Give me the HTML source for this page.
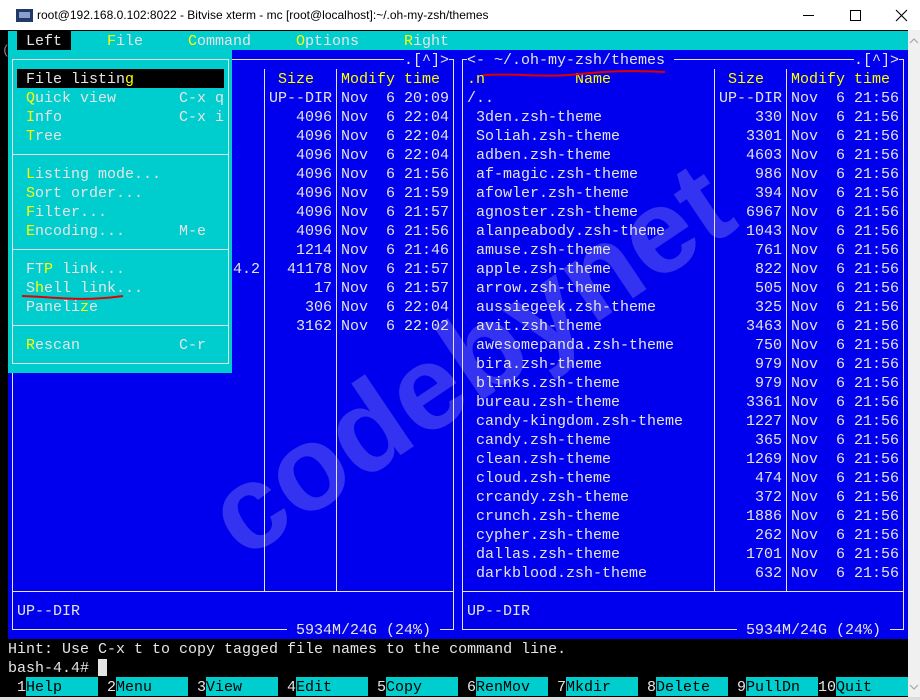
<!DOCTYPE html>
<html><head><meta charset="utf-8"><style>
*{margin:0;padding:0;box-sizing:border-box}
body{width:920px;height:700px;overflow:hidden;background:#000;position:relative;font-family:"Liberation Mono",monospace;font-size:15px;line-height:19px;color:#e5e5e5}
.a{position:absolute}
.t{position:absolute;white-space:pre;padding-top:1px}
.y{color:#ffff00}
.k{color:#000}
.h{position:absolute;height:1px;background:#e5e5e5}
.v{position:absolute;width:1px;background:#e5e5e5}
.b{background:#0000ee}
.r{text-align:right}
.fk{position:absolute;top:677px;height:19px;width:72px;background:#00cdcd;color:#000;white-space:pre;padding-top:1px}
</style></head><body>
<!-- title bar -->
<div class="a" style="left:0;top:0;width:920px;height:30px;background:#fff"></div>
<div class="a" style="left:16px;top:9px;width:17px;height:13px;background:#1f3a6a"></div>
<div class="a" style="left:19px;top:12px;width:11px;height:6px;background:#8aa0c8"></div>
<div class="t" style="left:37px;top:7px;font-family:'Liberation Sans',sans-serif;font-size:12px;line-height:16px;color:#000;padding:0">root@192.168.0.102:8022 - Bitvise xterm - mc [root@localhost]:~/.oh-my-zsh/themes</div>
<div class="a" style="left:803px;top:15px;width:11px;height:1px;background:#000"></div>
<div class="a" style="left:850px;top:10px;width:11px;height:11px;border:1px solid #000"></div>
<svg class="a" style="left:895px;top:9px" width="13" height="13"><path d="M1,1L12,12M12,1L1,12" stroke="#000" stroke-width="1.1"/></svg>
<!-- scrollbar -->
<div class="a" style="left:908px;top:30px;width:12px;height:670px;background:#f0f0f0"></div>
<svg class="a" style="left:908px;top:36px" width="12" height="10"><path d="M2,7L6,3L10,7" stroke="#a0a0a0" fill="none"/></svg>
<svg class="a" style="left:908px;top:682px" width="12" height="10"><path d="M2,3L6,7L10,3" stroke="#a0a0a0" fill="none"/></svg>
<div class="a" style="left:0;top:697px;width:920px;height:3px;background:#dcdcdc"></div>
<div class="t" style="left:2px;top:40px;color:#888;font-size:13px">(</div>
<!-- menu bar -->
<div class="a" style="left:8px;top:31px;width:900px;height:19px;background:#00cdcd"></div>
<div class="a" style="left:17px;top:31px;width:54px;height:19px;background:#000"></div>
<div class="t" style="left:26px;top:31px">Left</div>
<div class="t" style="left:107px;top:31px"><span class="y">F</span>ile</div>
<div class="t" style="left:188px;top:31px"><span class="y">C</span>ommand</div>
<div class="t" style="left:296px;top:31px"><span class="y">O</span>ptions</div>
<div class="t" style="left:404px;top:31px"><span class="y">R</span>ight</div>
<!-- panels bg -->
<div class="a b" style="left:8px;top:50px;width:900px;height:589px"></div>
<!-- watermark -->
<svg class="a" style="left:0;top:0" width="920" height="700"><text x="470" y="400" text-anchor="middle" font-family="Liberation Sans,sans-serif" font-weight="bold" font-size="120" fill="#ffffff" fill-opacity="0.2" transform="rotate(-34 470 360)">codebynet</text></svg>
<!-- left panel borders -->
<div class="h" style="left:12px;top:59px;width:442px"></div>
<div class="h" style="left:12px;top:629px;width:442px"></div>
<div class="h" style="left:12px;top:591px;width:442px"></div>
<div class="v" style="left:12px;top:59px;height:571px"></div>
<div class="v" style="left:453px;top:59px;height:571px"></div>
<div class="v" style="left:264px;top:69px;height:522px"></div>
<div class="v" style="left:336px;top:69px;height:522px"></div>
<!-- right panel borders -->
<div class="h" style="left:462px;top:59px;width:442px"></div>
<div class="h" style="left:462px;top:629px;width:442px"></div>
<div class="h" style="left:462px;top:591px;width:442px"></div>
<div class="v" style="left:462px;top:59px;height:571px"></div>
<div class="v" style="left:903px;top:59px;height:571px"></div>
<div class="v" style="left:714px;top:69px;height:522px"></div>
<div class="v" style="left:786px;top:69px;height:522px"></div>
<!-- border texts -->
<div class="t b" style="left:404px;top:50px;height:19px">.[^]></div>
<div class="t b" style="left:467px;top:50px;height:19px">&lt;- ~/.oh-my-zsh/themes </div>
<div class="t b" style="left:854px;top:50px;height:19px">.[^]></div>
<div class="t b" style="left:287px;top:620px;height:19px"> 5934M/24G (24%) </div>
<div class="t b" style="left:737px;top:620px;height:19px"> 5934M/24G (24%) </div>
<div class="t" style="left:17px;top:601px">UP--DIR</div>
<div class="t" style="left:467px;top:601px">UP--DIR</div>
<!-- left panel content -->
<div class="t y" style="left:278px;top:69px">Size</div>
<div class="t y" style="left:341px;top:69px">Modify time</div>
<div class="t" style="left:233px;top:259px">4.2</div>
<div class="t r" style="left:260px;top:88px;width:72px">UP--DIR
4096
4096
4096
4096
4096
4096
4096
1214
41178
17
306
3162</div>
<div class="t" style="left:341px;top:88px">Nov  6 20:09
Nov  6 22:04
Nov  6 22:04
Nov  6 22:04
Nov  6 21:56
Nov  6 21:59
Nov  6 21:57
Nov  6 21:56
Nov  6 21:46
Nov  6 21:57
Nov  6 21:57
Nov  6 22:04
Nov  6 22:02</div>
<!-- right panel content -->
<div class="t y" style="left:467px;top:69px">.n</div>
<div class="t y" style="left:575px;top:69px">Name</div>
<div class="t y" style="left:728px;top:69px">Size</div>
<div class="t y" style="left:791px;top:69px">Modify time</div>
<div class="t" style="left:467px;top:88px">/..
 3den.zsh-theme
 Soliah.zsh-theme
 adben.zsh-theme
 af-magic.zsh-theme
 afowler.zsh-theme
 agnoster.zsh-theme
 alanpeabody.zsh-theme
 amuse.zsh-theme
 apple.zsh-theme
 arrow.zsh-theme
 aussiegeek.zsh-theme
 avit.zsh-theme
 awesomepanda.zsh-theme
 bira.zsh-theme
 blinks.zsh-theme
 bureau.zsh-theme
 candy-kingdom.zsh-theme
 candy.zsh-theme
 clean.zsh-theme
 cloud.zsh-theme
 crcandy.zsh-theme
 crunch.zsh-theme
 cypher.zsh-theme
 dallas.zsh-theme
 darkblood.zsh-theme</div>
<div class="t r" style="left:710px;top:88px;width:72px">UP--DIR
330
3301
4603
986
394
6967
1043
761
822
505
325
3463
750
979
979
3361
1227
365
1269
474
372
1886
262
1701
632</div>
<div class="t" style="left:791px;top:88px">Nov  6 21:56
Nov  6 21:56
Nov  6 21:56
Nov  6 21:56
Nov  6 21:56
Nov  6 21:56
Nov  6 21:56
Nov  6 21:56
Nov  6 21:56
Nov  6 21:56
Nov  6 21:56
Nov  6 21:56
Nov  6 21:56
Nov  6 21:56
Nov  6 21:56
Nov  6 21:56
Nov  6 21:56
Nov  6 21:56
Nov  6 21:56
Nov  6 21:56
Nov  6 21:56
Nov  6 21:56
Nov  6 21:56
Nov  6 21:56
Nov  6 21:56
Nov  6 21:56</div>
<!-- dropdown menu -->
<div class="a" style="left:8px;top:50px;width:224px;height:323px;background:#00cdcd"></div>
<div class="h" style="left:12px;top:59px;width:217px"></div>
<div class="h" style="left:12px;top:363px;width:217px"></div>
<div class="v" style="left:12px;top:59px;height:305px"></div>
<div class="v" style="left:228px;top:59px;height:305px"></div>
<div class="h" style="left:12px;top:154px;width:217px"></div>
<div class="h" style="left:12px;top:249px;width:217px"></div>
<div class="h" style="left:12px;top:325px;width:217px"></div>
<div class="a" style="left:17px;top:69px;width:207px;height:19px;background:#000"></div>
<div class="t" style="left:26px;top:69px">File listin<span class="y">g</span></div>
<div class="t" style="left:26px;top:88px"><span class="y">Q</span>uick view</div>
<div class="t" style="left:179px;top:88px">C-x q</div>
<div class="t" style="left:26px;top:107px"><span class="y">I</span>nfo</div>
<div class="t" style="left:179px;top:107px">C-x i</div>
<div class="t" style="left:26px;top:126px"><span class="y">T</span>ree</div>
<div class="t" style="left:26px;top:164px"><span class="y">L</span>isting mode...</div>
<div class="t" style="left:26px;top:183px"><span class="y">S</span>ort order...</div>
<div class="t" style="left:26px;top:202px"><span class="y">F</span>ilter...</div>
<div class="t" style="left:26px;top:221px"><span class="y">E</span>ncoding...</div>
<div class="t" style="left:179px;top:221px">M-e</div>
<div class="t" style="left:26px;top:259px">FT<span class="y">P</span> link...</div>
<div class="t" style="left:26px;top:278px">S<span class="y">h</span>ell link...</div>
<div class="t" style="left:26px;top:297px">Paneli<span class="y">z</span>e</div>
<div class="t" style="left:26px;top:335px"><span class="y">R</span>escan</div>
<div class="t" style="left:179px;top:335px">C-r</div>
<!-- red annotations -->
<svg class="a" style="left:0;top:0" width="920" height="700"><path d="M483,75 C520,73 545,78 580,74 S640,71 665,72" stroke="#e00000" stroke-width="2" fill="none"/><path d="M22,296 C55,297 80,302 123,296" stroke="#e00000" stroke-width="2" fill="none"/></svg>
<!-- bottom -->
<div class="t" style="left:8px;top:639px">Hint: Use C-x t to copy tagged file names to the command line.</div>
<div class="t" style="left:8px;top:658px">bash-4.4# </div>
<div class="a" style="left:98px;top:659px;width:9px;height:17px;background:#e5e5e5"></div>
<div class="t" style="left:17px;top:677px">1</div><div class="fk" style="left:26px">Help</div>
<div class="t" style="left:107px;top:677px">2</div><div class="fk" style="left:116px">Menu</div>
<div class="t" style="left:197px;top:677px">3</div><div class="fk" style="left:206px">View</div>
<div class="t" style="left:287px;top:677px">4</div><div class="fk" style="left:296px">Edit</div>
<div class="t" style="left:377px;top:677px">5</div><div class="fk" style="left:386px">Copy</div>
<div class="t" style="left:467px;top:677px">6</div><div class="fk" style="left:476px">RenMov</div>
<div class="t" style="left:557px;top:677px">7</div><div class="fk" style="left:566px">Mkdir</div>
<div class="t" style="left:647px;top:677px">8</div><div class="fk" style="left:656px">Delete</div>
<div class="t" style="left:737px;top:677px">9</div><div class="fk" style="left:746px">PullDn</div>
<div class="t" style="left:818px;top:677px">10</div><div class="fk" style="left:836px;width:72px">Quit</div>
</body></html>
